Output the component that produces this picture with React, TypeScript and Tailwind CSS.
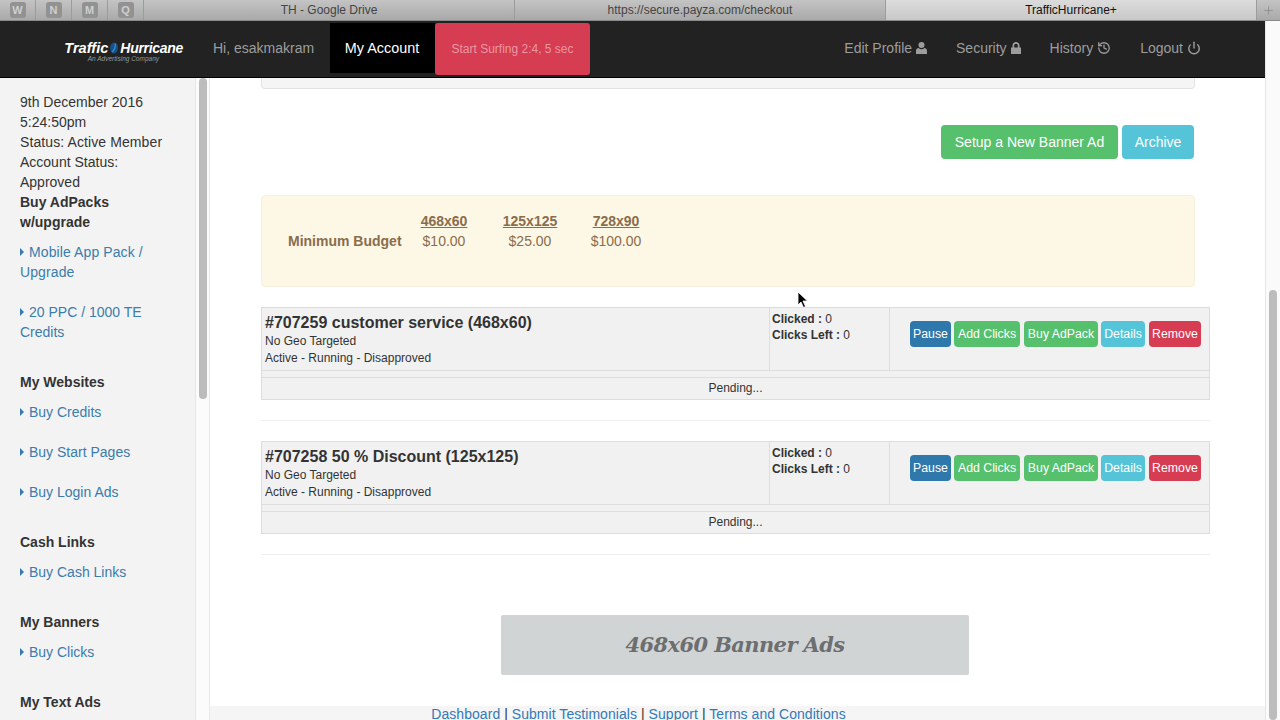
import type { ReactNode } from "react";
import { History, Plus, Power } from "lucide-react";

function Caret() {
  return <span className="mr-[5px] inline-block h-0 w-0 border-y-[4px] border-l-[4px] border-y-transparent border-l-[#337ab7] align-[1px]" />;
}

function SideLink({ children, className = "" }: { children: ReactNode; className?: string }) {
  return (
    <p className={`text-[#3a7cab] ${className}`}>
      <Caret />
      {children}
    </p>
  );
}

function Btn({ className, children }: { className: string; children: ReactNode }) {
  return <div className={`flex h-[26px] items-center justify-center rounded-[4px] text-[12.3px] text-white ${className}`}>{children}</div>;
}

function AdRow({ title }: { title: string }) {
  return (
    <div className="border border-[#ddd] bg-[#f1f1f1] text-[12px] leading-[17px] text-[#333]">
      <div className="flex h-[63px] border-b border-[#ddd]">
        <div className="w-[508px] border-r border-[#ddd] px-[3px]">
          <p className="mt-[4px] text-[16px] font-bold leading-[21px]">{title}</p>
          <p>No Geo Targeted</p>
          <p>Active - Running - Disapproved</p>
        </div>
        <div className="w-[120px] border-r border-[#ddd] pl-[2px] pt-[3px] leading-[16px]">
          <p><b>Clicked :</b> 0</p>
          <p><b>Clicks Left :</b> 0</p>
        </div>
        <div className="flex flex-1 justify-end pt-[13px] pr-[8px]">
          <Btn className="w-[41px] bg-[#2e78ac]">Pause</Btn>
          <Btn className="ml-[3px] w-[66px] bg-[#57c06d]">Add Clicks</Btn>
          <Btn className="ml-[4px] w-[74px] bg-[#57c06d]">Buy AdPack</Btn>
          <Btn className="ml-[3px] w-[44px] bg-[#55c4d9]">Details</Btn>
          <Btn className="ml-[4px] w-[52px] bg-[#d63c52]">Remove</Btn>
        </div>
      </div>
      <div className="mt-[6px] flex h-[22px] items-center justify-center border-t border-[#ddd]">Pending...</div>
    </div>
  );
}

function UserIcon() {
  return (
    <svg width="11" height="12" viewBox="0 0 11 12" fill="currentColor">
      <circle cx="5.5" cy="3" r="3" />
      <path d="M0 12 V9.2 C0 7.2 1.2 6 2.6 6 C3.4 6.8 4.4 7.2 5.5 7.2 C6.6 7.2 7.6 6.8 8.4 6 C9.8 6 11 7.2 11 9.2 V12 Z" />
    </svg>
  );
}

function LockIcon() {
  return (
    <svg width="10" height="12" viewBox="0 0 10 12" fill="currentColor">
      <path d="M0 5.5 H1.5 V3.5 C1.5 1.5 3 0 5 0 C7 0 8.5 1.5 8.5 3.5 V5.5 H10 V12 H0 Z M3.2 5.5 H6.8 V3.5 C6.8 2.5 6 1.7 5 1.7 C4 1.7 3.2 2.5 3.2 3.5 Z" fillRule="evenodd" />
    </svg>
  );
}

export default function App() {
  return (
    <div className="flex h-screen flex-col overflow-hidden bg-white font-['Liberation_Sans',sans-serif] text-[14px] leading-[20px] text-[#333]">
      {/* browser tabs */}
      <div className="flex h-[21px] shrink-0 items-stretch border-b border-[#8a8a8a] bg-gradient-to-b from-[#c4c4c4] to-[#a9a9a9] text-[12px] text-[#444]">
        <div className="flex w-[144px] items-center">
          {["W", "N", "M", "Q"].map((l) => (
            <div key={l} className="flex h-full w-[36px] shrink-0 items-center justify-center border-r border-[#9c9c9c]">
              <span className="flex h-[16px] w-[16px] items-center justify-center rounded-[3px] bg-[#929292] text-[11px] font-bold text-[#cfcfcf]">{l}</span>
            </div>
          ))}
        </div>
        <div className="flex w-[371px] items-center justify-center border-r border-[#9c9c9c]">TH - Google Drive</div>
        <div className="flex w-[371px] items-center justify-center border-r border-[#9c9c9c]">https://secure.payza.com/checkout</div>
        <div className="flex flex-1 items-center justify-center bg-gradient-to-b from-[#dcdcdc] to-[#c8c8c8] text-[#111]">TrafficHurricane+</div>
        <div className="flex w-[24px] items-center justify-center border-l border-[#9c9c9c] text-[#777]"><Plus size={13} strokeWidth={1} /></div>
      </div>

      <div className="flex min-h-0 flex-1">
        <div className="flex min-w-0 flex-1 flex-col">
          {/* nav */}
          <div className="flex h-[57px] shrink-0 items-stretch border-b border-black bg-[#222]">
            <div className="flex w-[213px] flex-col items-end justify-center pr-[30px] pt-[6px]">
              <span className="flex items-center text-[14px] font-bold italic leading-[14px] text-white">
                <span className="text-[14.6px]">Traffic</span>
                <svg className="mx-[1px]" width="10" height="12" viewBox="0 0 10 12">
                  <ellipse cx="5" cy="6" rx="4" ry="5.5" fill="#174f86" />
                  <path d="M3 10 C5.5 8 6.5 4.5 6.5 1.5" stroke="#2f8ed0" strokeWidth="1.4" fill="none" />
                </svg>
                <span className="tracking-[-0.3px]">Hurricane</span>
              </span>
              <span className="mr-[24px] text-[6.5px] italic leading-[8px] text-[#999]">An Advertising Company</span>
            </div>
            <div className="flex items-center pb-[3px] text-[#9d9d9d]">
              <span className="w-[117px]">Hi, esakmakram</span>
            </div>
            <div className="mb-[4px] mt-[2px] flex w-[105px] items-center justify-center bg-black pr-[1px] text-[14.4px] text-white">My Account</div>
            <div className="mb-[2px] mt-[2px] flex w-[155px] items-center justify-center rounded-[3px] bg-[#d63c52] pb-[1px] text-[12px] text-[#eb97a3]">Start Surfing 2:4, 5 sec</div>
            <div className="flex flex-1 items-center justify-end gap-[29px] pb-[2px] pr-[64px] text-[#9d9d9d]">
              <span className="flex items-center gap-[4px]">Edit Profile <UserIcon /></span>
              <span className="flex items-center gap-[4px]">Security <LockIcon /></span>
              <span className="flex items-center gap-[4px]">History <History size={14} strokeWidth={2.2} /></span>
              <span className="flex items-center gap-[4px]">Logout <Power size={14} strokeWidth={2.4} /></span>
            </div>
          </div>

          <div className="flex min-h-0 flex-1">
            {/* sidebar */}
            <aside className="w-[196px] shrink-0 overflow-hidden border-r border-[#e6e6e6] bg-[#f3f3f3] pl-[20px] pr-[10px] pt-[14px]">
              <p>9th December 2016</p>
              <p>5:24:50pm</p>
              <p className="tracking-[0.1px]">Status: Active Member</p>
              <p>Account Status:</p>
              <p>Approved</p>
              <p className="font-bold">Buy AdPacks<br />w/upgrade</p>
              <SideLink className="mt-[10px] tracking-[0.1px]">Mobile App Pack /<br />Upgrade</SideLink>
              <SideLink className="mt-[20px]">20 PPC / 1000 TE<br />Credits</SideLink>
              <p className="mt-[30px] font-bold">My Websites</p>
              <SideLink className="mt-[10px]">Buy Credits</SideLink>
              <SideLink className="mt-[20px]">Buy Start Pages</SideLink>
              <SideLink className="mt-[20px]">Buy Login Ads</SideLink>
              <p className="mt-[30px] font-bold">Cash Links</p>
              <SideLink className="mt-[10px]">Buy Cash Links</SideLink>
              <p className="mt-[30px] font-bold">My Banners</p>
              <SideLink className="mt-[10px]">Buy Clicks</SideLink>
              <p className="mt-[30px] font-bold">My Text Ads</p>
            </aside>
            <div className="w-[14px] shrink-0 border-r border-[#e9e9e9] bg-[#fbfbfb] pl-[3px]">
              <div className="h-[321px] w-[8px] rounded-[4px] bg-[#bcbcbc]" />
            </div>

            {/* main */}
            <main className="relative flex min-w-0 flex-1 flex-col">
              <div className="flex-1 pl-[51px] pr-[55px]">
                <div className="mr-[15px] h-[11px] rounded-b-[4px] border border-t-0 border-[#e3e3e3] bg-[#f5f5f5]" />
                <div className="mr-[16px] mt-[36px] flex justify-end gap-[4px]">
                  <div className="flex h-[34px] w-[177px] items-center justify-center rounded-[4px] bg-[#57c06d] text-white">Setup a New Banner Ad</div>
                  <div className="flex h-[34px] w-[72px] items-center justify-center rounded-[4px] bg-[#55c4d9] text-white">Archive</div>
                </div>
                <div className="mr-[15px] mt-[36px] flex h-[92px] rounded-[4px] border border-[#f8efdc] bg-[#fdf7e6] pl-[26px] pt-[15px] text-[#8a6d4b]">
                  <div className="mt-[20px] w-[113px] whitespace-nowrap font-bold">Minimum Budget</div>
                  {[["468x60", "$10.00"], ["125x125", "$25.00"], ["728x90", "$100.00"]].map(([a, b]) => (
                    <div key={a} className="w-[86px] text-center">
                      <p className="font-bold underline">{a}</p>
                      <p>{b}</p>
                    </div>
                  ))}
                </div>
                <div className="mt-[20px]"><AdRow title="#707259 customer service (468x60)" /></div>
                <div className="mt-[20px] h-px bg-[#eee]" />
                <div className="mt-[20px]"><AdRow title="#707258 50 % Discount (125x125)" /></div>
                <div className="mt-[20px] h-px bg-[#eee]" />
                <div className="mr-[1px] mt-[60px] flex justify-center">
                  <div className="flex h-[60px] w-[468px] items-center justify-center rounded-[2px] bg-[#d1d4d5] font-['DejaVu_Serif',serif] text-[21px] font-bold italic tracking-[-0.6px] text-[#6c6e70]">468x60 Banner Ads</div>
                </div>
              </div>
              <div className="flex h-[14px] shrink-0 justify-center overflow-hidden bg-[#f5f5f5] pr-[198px] leading-[16px] text-[#337ab7]">
                <span className="tracking-[0.05px]">Dashboard <span className="text-[#333]">|</span> Submit Testimonials <span className="text-[#333]">|</span> Support <span className="text-[#333]">|</span> Terms and Conditions</span>
              </div>
              {/* cursor */}
              <svg className="absolute left-[587px] top-[213px]" width="12" height="18" viewBox="0 0 12 18">
                <path d="M1 1 L1 14 L4 11 L6.5 16.5 L8.5 15.5 L6 10 L10.5 10 Z" fill="#000" stroke="#fff" strokeWidth="0.8" />
              </svg>
            </main>
          </div>
        </div>

        {/* page scrollbar */}
        <div className="flex w-[15px] shrink-0 flex-col border-l border-[#e6e6e6] bg-[#fafafa] pl-[3px] pt-[269px]">
          <div className="w-[8px] flex-1 rounded-[4px] bg-[#bcbcbc]" />
        </div>
      </div>
    </div>
  );
}
